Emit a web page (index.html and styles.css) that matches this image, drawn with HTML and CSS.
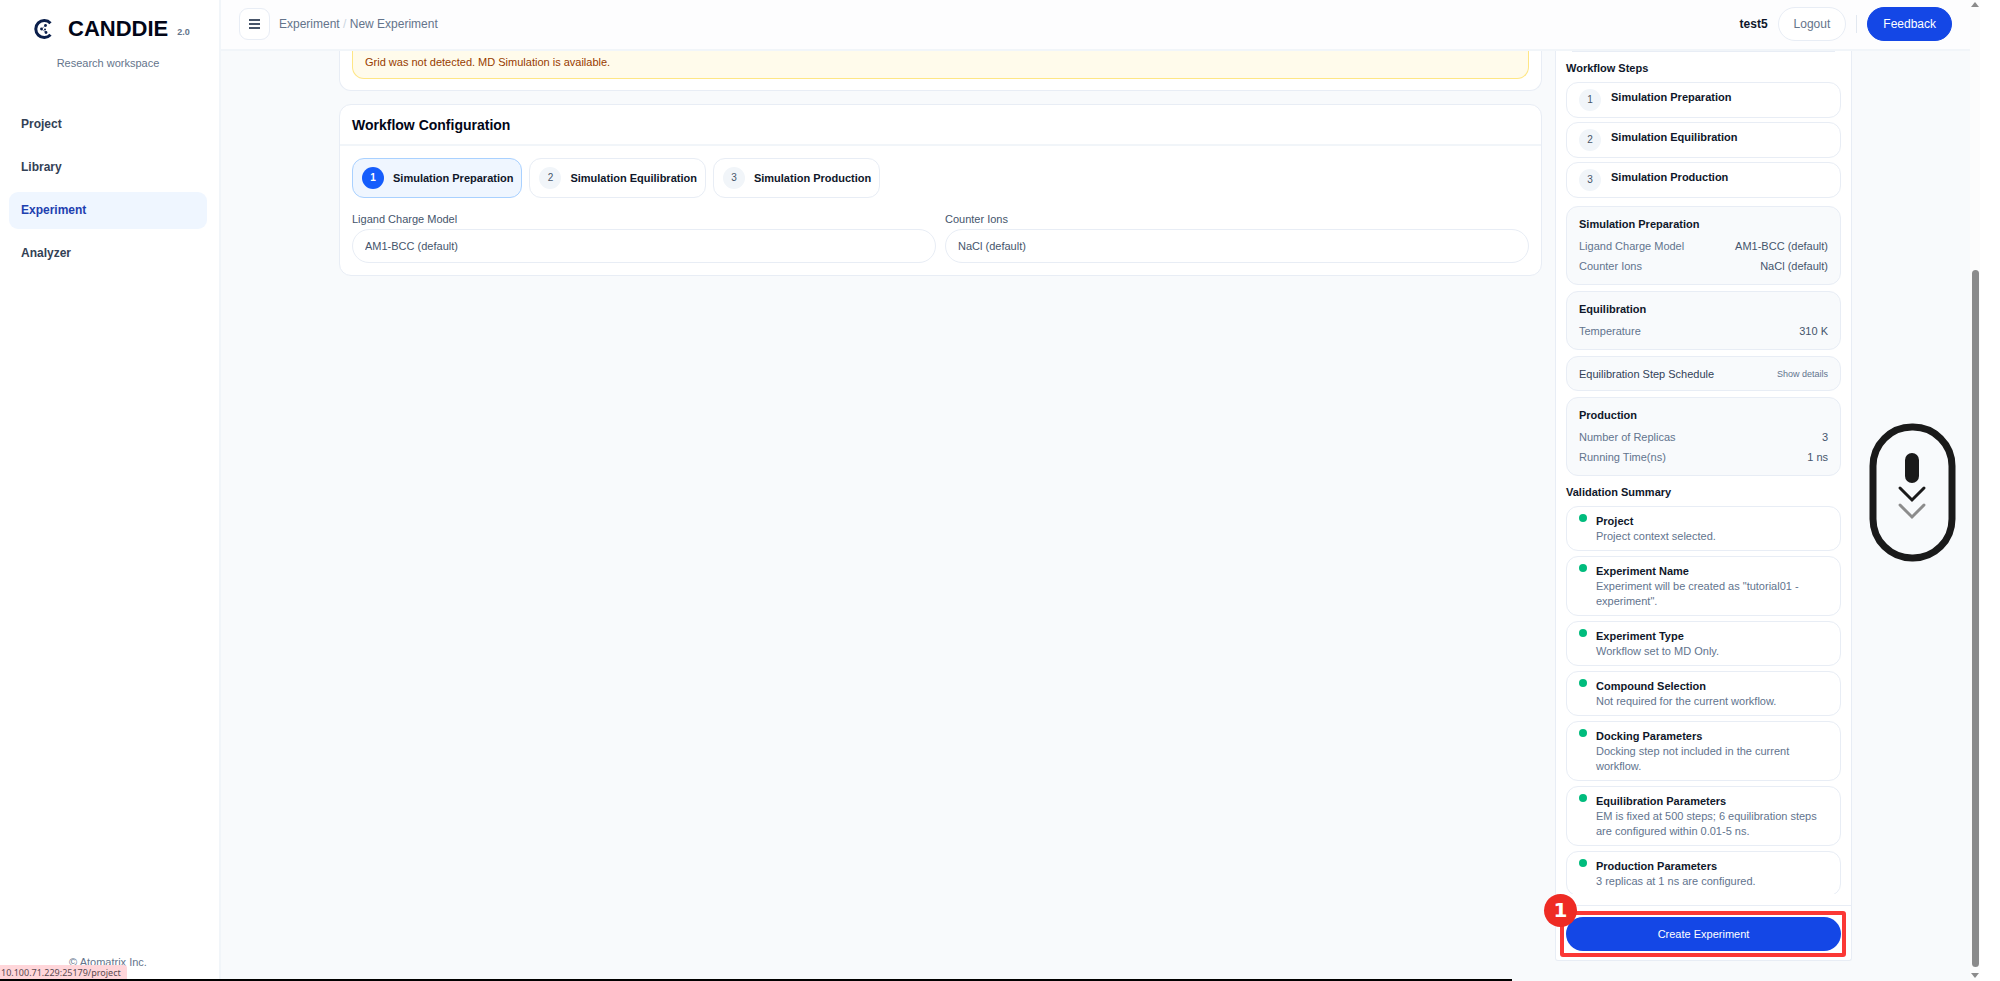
FILE: index.html
```html
<!DOCTYPE html>
<html lang="en">

<head>
    <meta charset="UTF-8">
    <meta name="viewport" content="width=device-width, initial-scale=1.0">
    <title>CANDDIE - New Experiment</title>
    <link rel="stylesheet" href="styles.css">
</head>

<body>

    <div class="app">
        <aside class="sidebar">
            <div class="brand">
                <svg class="logo" viewBox="0 0 20 20" aria-hidden="true">
                    <path d="M17.5 4.2A8.5 8.5 0 1 0 17.5 15.8" fill="none" stroke="#0b1f4b" stroke-width="3" />
                    <path d="M12.5 6.5L8.5 10L13 13.5" fill="none" stroke="#8793ad" stroke-width="1" />
                    <circle cx="12.5" cy="6.5" r="1.4" fill="#0b1f4b" />
                    <circle cx="8.5" cy="10" r="1.4" fill="#0b1f4b" />
                    <circle cx="12" cy="10.5" r="1" fill="#0b1f4b" />
                    <circle cx="13" cy="13.5" r="1.4" fill="#0b1f4b" />
                </svg>
                <span class="brand-name">CANDDIE</span>
                <span class="version">2.0</span>
            </div>
            <p class="tagline">Research workspace</p>
            <nav class="menu">
                <a href="#project">Project</a>
                <a href="#library">Library</a>
                <a href="#experiment" class="active">Experiment</a>
                <a href="#analyzer">Analyzer</a>
            </nav>
            <p class="copyright">© Atomatrix Inc.</p>
        </aside>

        <div class="page">
            <header class="topbar">
                <button type="button" class="menu-btn" aria-label="Toggle menu">
                    <svg viewBox="0 0 12 12" width="12" height="12">
                        <path d="M0 2H11M0 6H11M0 10H11" stroke="#475569" stroke-width="2" />
                    </svg>
                </button>
                <div class="crumbs">Experiment <span>/</span> New Experiment</div>
                <div class="account">
                    <strong>test5</strong>
                    <button type="button" class="logout">Logout</button>
                    <span class="divider"></span>
                    <button type="button" class="feedback">Feedback</button>
                </div>
            </header>

            <div class="content">
                <main class="main">
                    <section class="card card-top">
                        <div class="notice">Grid was not detected. MD Simulation is available.</div>
                    </section>

                    <section class="card">
                        <h2>Workflow Configuration</h2>
                        <div class="card-body">
                            <div class="tabs">
                                <button type="button" class="tab selected"><span class="num">1</span>Simulation Preparation</button>
                                <button type="button" class="tab"><span class="num">2</span>Simulation Equilibration</button>
                                <button type="button" class="tab"><span class="num">3</span>Simulation Production</button>
                            </div>
                            <div class="fields">
                                <div class="field">
                                    <label for="charge">Ligand Charge Model</label>
                                    <select id="charge">
                                        <option>AM1-BCC (default)</option>
                                    </select>
                                </div>
                                <div class="field">
                                    <label for="ions">Counter Ions</label>
                                    <select id="ions">
                                        <option>NaCl (default)</option>
                                    </select>
                                </div>
                            </div>
                        </div>
                    </section>
                </main>

                <aside class="summary">
                    <div class="summary-body">
                        <div class="previous"></div>
                        <h3>Workflow Steps</h3>
                        <ol class="steps">
                            <li><span class="num">1</span><b>Simulation Preparation</b></li>
                            <li><span class="num">2</span><b>Simulation Equilibration</b></li>
                            <li><span class="num">3</span><b>Simulation Production</b></li>
                        </ol>

                        <div class="boxes">
                            <div class="box">
                                <h4>Simulation Preparation</h4>
                                <p><span>Ligand Charge Model</span><span class="value">AM1-BCC (default)</span></p>
                                <p><span>Counter Ions</span><span class="value">NaCl (default)</span></p>
                            </div>
                            <div class="box">
                                <h4>Equilibration</h4>
                                <p><span>Temperature</span><span class="value">310 K</span></p>
                            </div>
                            <button type="button" class="schedule">Equilibration Step Schedule <small>Show details</small></button>
                            <div class="box">
                                <h4>Production</h4>
                                <p><span>Number of Replicas</span><span class="value">3</span></p>
                                <p><span>Running Time(ns)</span><span class="value">1 ns</span></p>
                            </div>
                        </div>

                        <h3>Validation Summary</h3>
                        <ul class="checks">
                            <li>
                                <b>Project</b>
                                <p>Project context selected.</p>
                            </li>
                            <li>
                                <b>Experiment Name</b>
                                <p>Experiment will be created as "tutorial01 - experiment".</p>
                            </li>
                            <li>
                                <b>Experiment Type</b>
                                <p>Workflow set to MD Only.</p>
                            </li>
                            <li>
                                <b>Compound Selection</b>
                                <p>Not required for the current workflow.</p>
                            </li>
                            <li>
                                <b>Docking Parameters</b>
                                <p>Docking step not included in the current workflow.</p>
                            </li>
                            <li>
                                <b>Equilibration Parameters</b>
                                <p>EM is fixed at 500 steps; 6 equilibration steps are configured within 0.01-5 ns.</p>
                            </li>
                            <li>
                                <b>Production Parameters</b>
                                <p>3 replicas at 1 ns are configured.</p>
                            </li>
                        </ul>
                    </div>
                    <div class="summary-footer">
                        <button type="button" class="create">Create Experiment</button>
                        <div class="highlight"><span class="marker">1</span></div>
                    </div>
                </aside>
            </div>
        </div>

        <div class="scrollbar">
            <span class="arrow up"></span>
            <span class="thumb"></span>
            <span class="arrow down"></span>
        </div>
    </div>

    <svg class="mouse" viewBox="0 0 88 140" aria-hidden="true">
        <rect x="4" y="4" width="79" height="131" rx="39" fill="none" stroke="#1a1a1a" stroke-width="7" />
        <rect x="36" y="30" width="14" height="30" rx="7" fill="#1a1a1a" />
        <path d="M31 65L43 77L55 65" fill="none" stroke="#1a1a1a" stroke-width="3" stroke-linecap="round" />
        <path d="M31 82L43 94L55 82" fill="none" stroke="#8c8c8c" stroke-width="3" stroke-linecap="round" />
    </svg>

    <div class="status">10.100.71.229:25179/project</div>
    <div class="progress"></div>

</body>

</html>
```
FILE: styles.css
```css
* {
    box-sizing: border-box;
}

body {
    margin: 0;
    background-color: #fff;
    color: #0f172a;
    font-family: "Liberation Sans", Arial, sans-serif;
    font-size: 11px;
    line-height: 16px;
}

h2,
h3,
h4,
p,
ol,
ul {
    margin: 0;
    padding: 0;
}

ol,
ul {
    list-style: none;
}

button,
select {
    font-family: inherit;
    font-size: inherit;
    line-height: inherit;
    color: inherit;
}

.app {
    display: flex;
    height: 100vh;
    overflow: hidden;
    padding-right: 20px;
}

/* sidebar */
.sidebar {
    display: flex;
    flex-direction: column;
    width: 221px;
    padding: 16px 12px 11px 9px;
    border-right: 2px solid #f1f5f9;
    background-color: #fff;
}

.brand {
    display: flex;
    align-items: center;
    height: 26px;
    padding-left: 24px;
}

.logo {
    width: 20px;
    height: 20px;
}

.brand-name {
    margin-left: 15px;
    font-size: 22px;
    font-weight: bold;
    color: #020617;
}

.version {
    margin: 6px 0 0 9px;
    font-size: 9px;
    font-weight: bold;
    color: #64748b;
}

.tagline,
.copyright {
    text-align: center;
    color: #64748b;
}

.tagline {
    margin-top: 13px;
}

.menu {
    display: flex;
    flex-direction: column;
    gap: 6px;
    margin-top: 35px;
}

.menu a {
    padding: 10px 12px;
    border-radius: 9px;
    color: #334155;
    font-size: 12px;
    font-weight: bold;
    line-height: 17px;
    text-decoration: none;
}

.menu .active {
    background-color: #eff6ff;
    color: #1e40af;
}

.copyright {
    margin-top: auto;
}

/* top bar */
.page {
    display: flex;
    flex: 1;
    flex-direction: column;
    min-width: 0;
    background-color: #f8fafc;
}

.topbar {
    display: flex;
    flex-shrink: 0;
    align-items: center;
    height: 51px;
    padding: 0 18px 1px;
    border-bottom: 2px solid #f1f5f9;
    background-color: #fdfdfe;
    font-size: 12px;
}

.menu-btn {
    display: flex;
    align-items: center;
    justify-content: center;
    width: 31px;
    height: 32px;
    padding: 0;
    border: 1px solid #e8edf5;
    border-radius: 9px;
    background-color: #fff;
}

.crumbs {
    margin-left: 9px;
    color: #64748b;
}

.crumbs span {
    color: #cbd5e1;
}

.account {
    display: flex;
    align-items: center;
    gap: 10px;
    margin-left: auto;
}

.logout,
.feedback {
    height: 34px;
    padding: 0 15px;
    border: 1px solid #e8edf5;
    border-radius: 17px;
    background-color: #fff;
    color: #64748b;
}

.divider {
    width: 1px;
    height: 18px;
    background-color: #e2e8f0;
}

.feedback {
    border-color: #1447e6;
    background-color: #1447e6;
    color: #fff;
}

/* content */
.content {
    display: flex;
    flex: 1;
    gap: 13px;
    min-height: 0;
    padding: 0 118px;
}

.main {
    flex: 1;
    min-width: 0;
}

.card {
    border: 1px solid #e8edf5;
    border-radius: 12px;
    background-color: #fff;
}

.card-top {
    margin-bottom: 13px;
    padding: 0 12px 11px;
    border-top: none;
    border-radius: 0 0 12px 12px;
}

.notice {
    padding: 3px 12px 8px;
    border: 1px solid #fee685;
    border-top: none;
    border-radius: 0 0 12px 12px;
    background-color: #fffbeb;
    color: #973c00;
}

.card h2 {
    padding: 12px 12px 11px;
    border-bottom: 2px solid #f1f5f9;
    font-size: 14px;
    line-height: 16px;
    color: #020617;
}

.card-body {
    padding: 12px;
}

.tabs {
    display: flex;
    gap: 7px;
}

.tab {
    display: flex;
    align-items: center;
    gap: 9px;
    height: 40px;
    padding: 0 8px 0 9px;
    border: 1px solid #e8edf5;
    border-radius: 12px;
    background-color: #fff;
    font-weight: bold;
}

.tab.selected {
    border-color: #a9d1ff;
    background-color: #eff6ff;
}

.num {
    flex-shrink: 0;
    width: 22px;
    height: 22px;
    border-radius: 50%;
    background-color: #f1f5f9;
    color: #475569;
    font-size: 10px;
    font-weight: normal;
    line-height: 22px;
    text-align: center;
}

.tab.selected .num {
    background-color: #155dfc;
    color: #fff;
    font-weight: bold;
}

.fields {
    display: grid;
    grid-template-columns: 1fr 1fr;
    gap: 9px;
    margin-top: 13px;
}

.field {
    display: flex;
    flex-direction: column;
}

.field label {
    margin-bottom: 1px;
    line-height: 17px;
    color: #45556c;
}

.field select {
    width: 100%;
    height: 34px;
    padding: 0 12px;
    border: 1px solid #e8edf5;
    border-radius: 17px;
    background-color: #fff;
    color: #45556c;
    appearance: none;
}

/* summary column */
.summary {
    display: flex;
    flex-direction: column;
    align-self: flex-start;
    width: 297px;
    max-height: calc(100vh - 71px);
    border: 1px solid #e8edf5;
    border-top: none;
    border-radius: 0 0 3px 3px;
    background-color: #fff;
}

.summary-body {
    flex: 1;
    min-height: 0;
    margin-bottom: 11px;
    padding: 0 10px;
    overflow: hidden;
}

.previous {
    height: 1px;
    margin: 0 6px 8px;
    background-color: #e8edf5;
}

.summary h3 {
    font-size: 11px;
    line-height: 16px;
}

.steps {
    display: flex;
    flex-direction: column;
    gap: 4px;
    margin: 6px 0 8px;
}

.steps li {
    display: flex;
    gap: 10px;
    height: 36px;
    padding: 6px 12px;
    border: 1px solid #e8edf5;
    border-radius: 12px;
}

.boxes {
    display: flex;
    flex-direction: column;
    gap: 6px;
    margin-bottom: 8px;
}

.box,
.schedule {
    padding: 9px 12px 8px;
    border: 1px solid #e8edf5;
    border-radius: 12px;
    background-color: #f8fafc;
}

.box h4 {
    margin-bottom: 4px;
    font-size: 11px;
    line-height: 16px;
}

.box p {
    display: flex;
    justify-content: space-between;
    line-height: 20px;
    color: #62748e;
}

.box .value {
    color: #45556c;
}

.schedule {
    display: flex;
    justify-content: space-between;
    color: #314158;
}

.schedule small {
    font-size: 9px;
    color: #62748e;
}

.checks {
    display: flex;
    flex-direction: column;
    gap: 5px;
    margin-top: 6px;
}

.checks li {
    position: relative;
    padding: 6px 12px 6px 29px;
    border: 1px solid #e8edf5;
    border-radius: 12px;
}

.checks li::before {
    content: "";
    position: absolute;
    top: 7px;
    left: 12px;
    width: 8px;
    height: 8px;
    border-radius: 50%;
    background-color: #00bc7d;
}

.checks b {
    display: block;
}

.checks p {
    line-height: 15px;
    color: #62748e;
}

.summary-footer {
    position: relative;
    padding: 11px 10px 9px;
    border-top: 1px solid #e8edf5;
}

.create {
    display: block;
    width: 100%;
    height: 34px;
    border: none;
    border-radius: 17px;
    background-color: #1447e6;
    color: #fff;
}

.highlight {
    position: absolute;
    inset: 5px 5px 3px 4px;
    border: 4px solid #fb3835;
    border-radius: 3px;
    pointer-events: none;
}

.marker {
    position: absolute;
    top: -21px;
    left: -20px;
    width: 33px;
    height: 33px;
    border-radius: 50%;
    background-color: #ee2b24;
    color: #fff;
    font: bold 20px/33px "DejaVu Sans", sans-serif;
    text-align: center;
}

/* window edges */
.scrollbar {
    display: flex;
    flex-direction: column;
    align-items: center;
    width: 10px;
    padding: 2px 0 3px;
    background-color: #fcfcfc;
}

.arrow {
    border-right: 4px solid transparent;
    border-left: 4px solid transparent;
}

.arrow.up {
    border-bottom: 5px solid #8b8b8b;
}

.arrow.down {
    margin-top: 6px;
    border-top: 5px solid #8b8b8b;
}

.thumb {
    width: 7px;
    height: 71.4%;
    margin-top: auto;
    border-radius: 4px;
    background-color: #8b8b8b;
}

.mouse {
    position: fixed;
    top: 423px;
    right: 43px;
    width: 88px;
    height: 140px;
}

.status {
    position: fixed;
    bottom: 2px;
    left: 0;
    height: 14px;
    padding: 0 6px 0 1px;
    border-top-right-radius: 3px;
    background-color: #ffd6da;
    color: #5b4a50;
    font: 9px/16px "Noto Sans", sans-serif;
}

.progress {
    position: fixed;
    bottom: 0;
    left: 0;
    width: 75.6%;
    height: 2px;
    background-color: #000;
}
```
